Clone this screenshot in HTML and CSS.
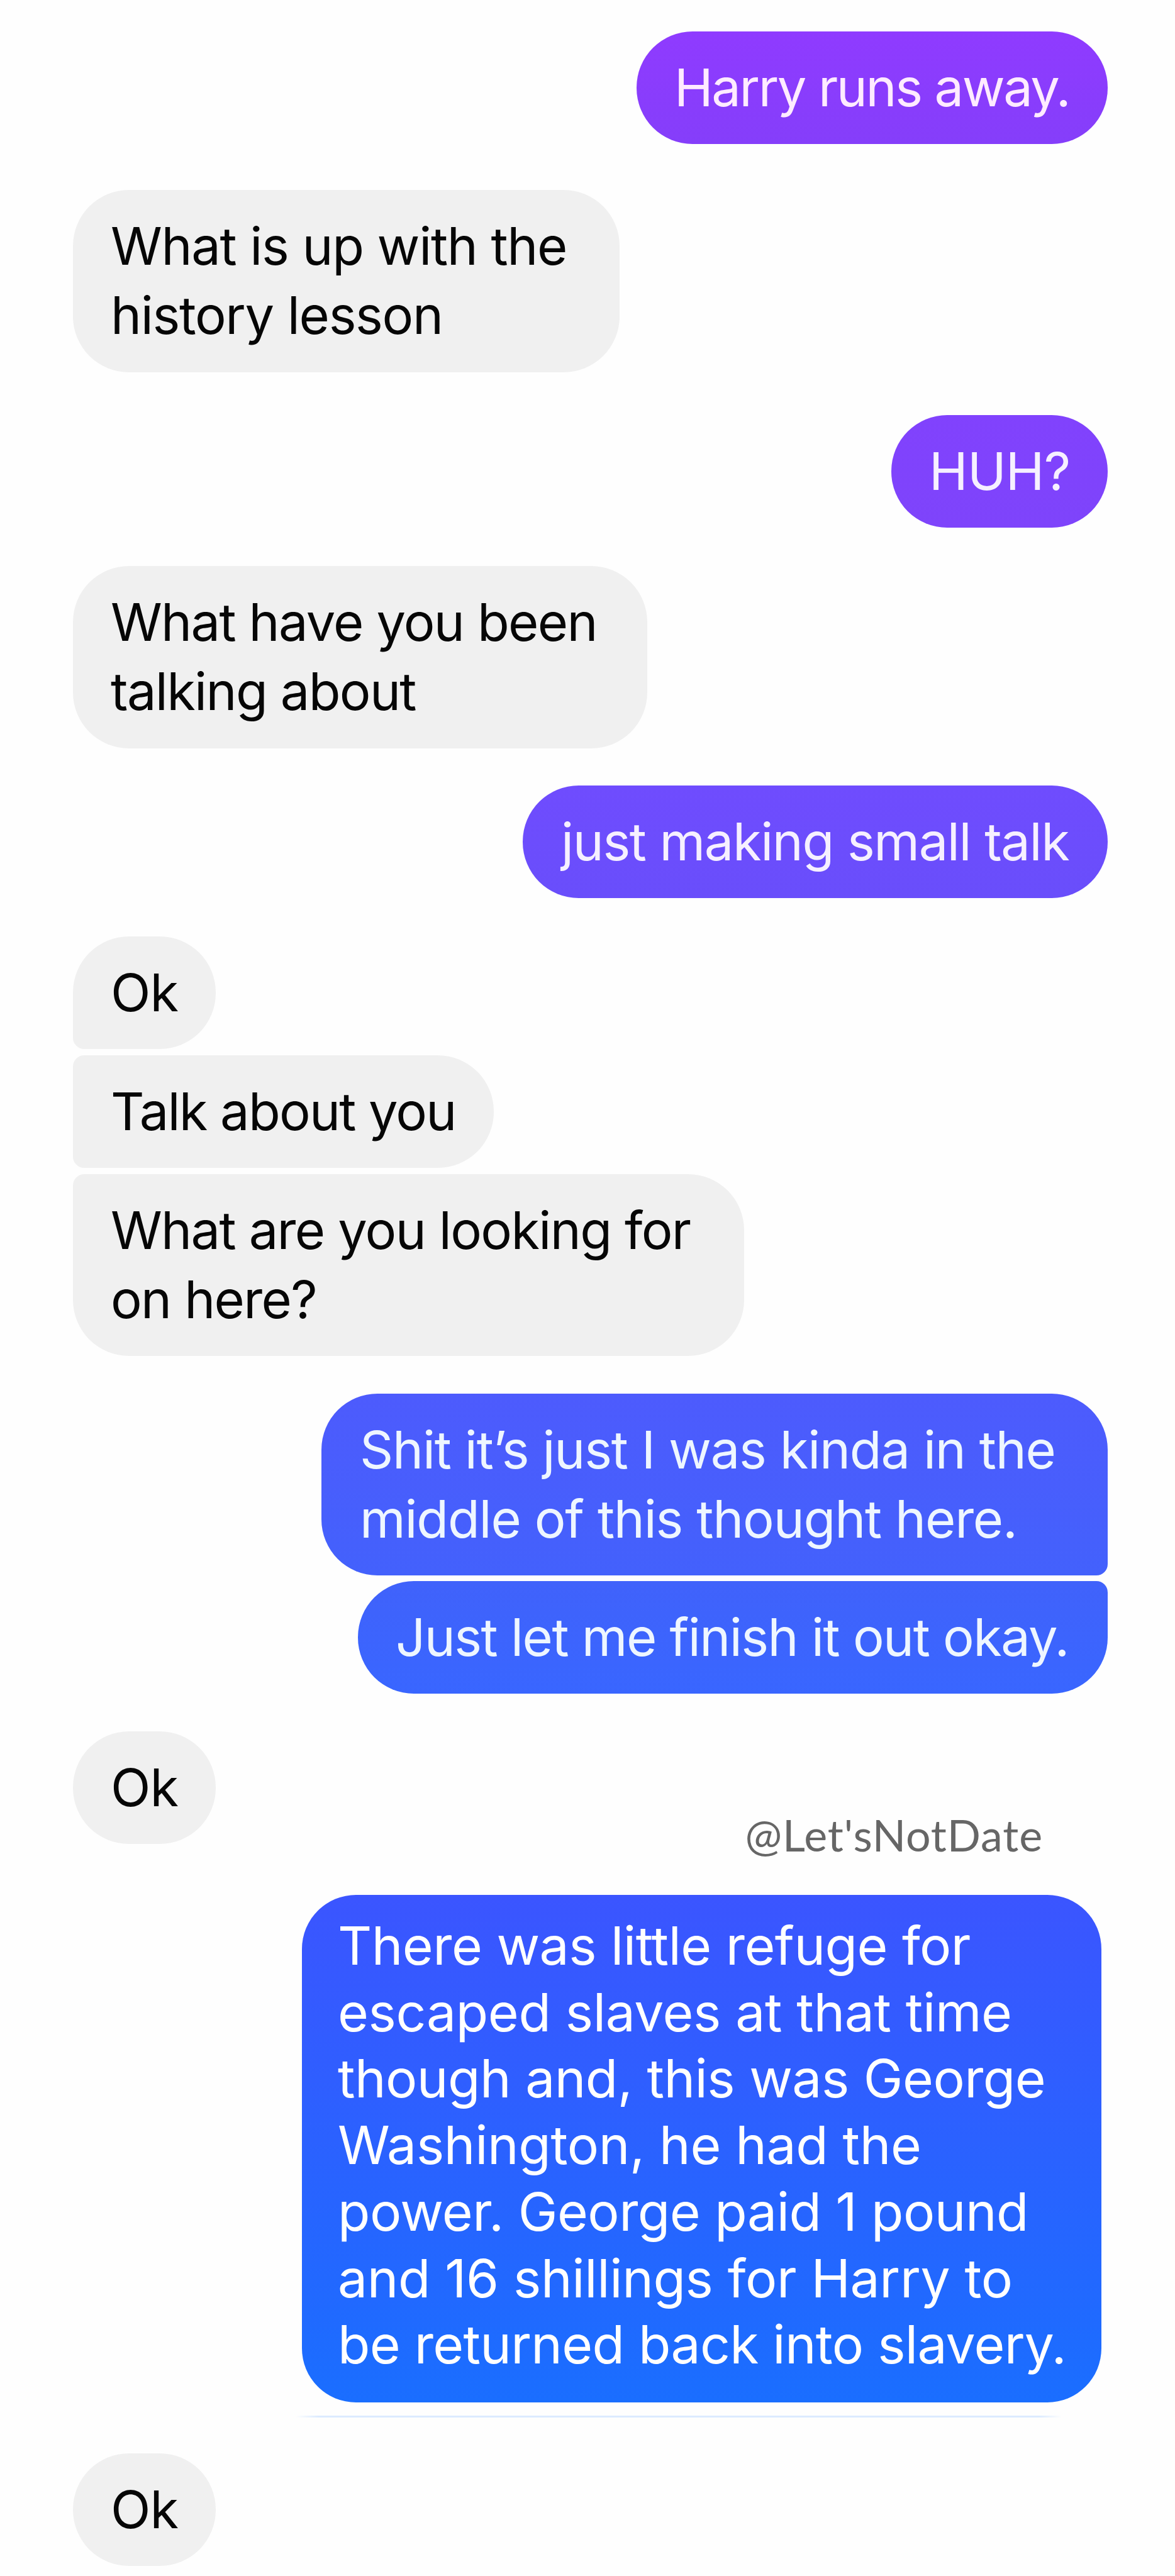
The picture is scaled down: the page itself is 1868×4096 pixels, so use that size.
FILE: index.html
```html
<!DOCTYPE html>
<html lang="en">
<head>
    <meta charset="UTF-8">
    <meta name="viewport" content="width=device-width, initial-scale=1.0">
    <title>Chat</title>
    <link rel="stylesheet" href="styles.css">
</head>
<body>

    <div class="chat">
        <div class="message sent harry">Harry runs away.</div>

        <div class="message received lesson">What is up with the<br>history lesson</div>

        <div class="message sent huh">HUH?</div>

        <div class="message received talking">What have you been<br>talking about</div>

        <div class="message sent small-talk">just making small talk</div>

        <!-- Group of three received messages -->
        <div class="message received ok group-first">Ok</div>
        <div class="message received about-you group-middle">Talk about you</div>
        <div class="message received looking group-last">What are you looking for<br>on here?</div>

        <!-- Group of two sent messages -->
        <div class="message sent thought group-first">Shit it’s just I was kinda in the<br>middle of this thought here.</div>
        <div class="message sent finish group-last">Just let me finish it out okay.</div>

        <div class="reply-row">
            <div class="message received ok">Ok</div>
            <div class="handle">@Let'sNotDate</div>
        </div>

        <div class="message sent story">
            <span class="tight">There was little refuge for</span><br>
            escaped slaves at that time<br>
            <span class="tight">though and, this was George</span><br>
            Washington, he had the<br>
            <span class="tight">power. George paid 1 pound</span><br>
            and 16 shillings for Harry to<br>
            <span class="tighter">be returned back into slavery.</span>
        </div>
        <div class="divider"></div>

        <div class="message received ok last">Ok</div>
    </div>

</body>
</html>
```
FILE: styles.css
```css
body {
    margin: 0;
    background-color: #fefefe;
    font-family: Inter, "Liberation Sans", sans-serif;
}

.chat {
    display: flex;
    flex-direction: column;
    height: 4096px;
    padding: 50px 107px 0 116px;
    box-sizing: border-box;
    overflow: hidden;
}

/* Bubbles */
.message {
    flex-shrink: 0;
    box-sizing: border-box;
    padding: 34px 0 35px 60px;
    border-radius: 89px;
    font-size: 83px;
    line-height: 110px;
    letter-spacing: -1.5px;
    white-space: nowrap;
}

.received {
    align-self: flex-start;
    background-color: #f0f0f0;
    color: #060606;
}

.sent {
    align-self: flex-end;
    color: #f6f0ff;
}

/* Squared corners where bubbles of one group meet */
.received.group-first {
    border-bottom-left-radius: 18px;
}

.received.group-middle {
    border-top-left-radius: 18px;
    border-bottom-left-radius: 18px;
}

.received.group-last {
    border-top-left-radius: 18px;
}

.sent.group-first {
    border-bottom-right-radius: 18px;
}

.sent.group-last {
    border-top-right-radius: 18px;
}

/* Single messages */
.harry {
    width: 749px;
    letter-spacing: -2.4px;
    background: linear-gradient(#8f3bff, #853efa);
    color: #ffebff;
}

.lesson {
    width: 869px;
    margin-top: 73px;
    padding-bottom: 36px;
    letter-spacing: -1.35px;
}

.huh {
    width: 344px;
    margin-top: 68px;
    letter-spacing: -0.8px;
    background: linear-gradient(#8142fd, #7e44fb);
}

.talking {
    width: 913px;
    margin-top: 61px;
    padding-bottom: 36px;
    letter-spacing: -1.68px;
}

.small-talk {
    width: 930px;
    margin-top: 59px;
    padding-left: 61px;
    letter-spacing: -1.4px;
    background: linear-gradient(#6f4cfe, #694efb);
}

.ok {
    width: 227px;
    margin-top: 61px;
    letter-spacing: -1px;
}

.about-you {
    width: 669px;
    margin-top: 10px;
    letter-spacing: -1.8px;
}

.looking {
    width: 1067px;
    margin-top: 10px;
    letter-spacing: -1.66px;
}

.thought {
    width: 1250px;
    margin-top: 60px;
    padding-left: 61px;
    letter-spacing: -1.22px;
    background: linear-gradient(#4d5bfd, #4361fc);
    color: #eef6ff;
}

.finish {
    width: 1192px;
    margin-top: 9px;
    padding-left: 60px;
    letter-spacing: -1.55px;
    background: linear-gradient(#4062fb, #3966ff);
    color: #eef6ff;
}

.reply-row {
    display: flex;
    justify-content: space-between;
    margin-top: 60px;
}

.reply-row .ok {
    margin-top: 0;
}

.handle {
    height: 50px;
    margin: 122px 103px 0 0;
    font-family: Lato, sans-serif;
    font-size: 70px;
    line-height: 84px;
    letter-spacing: 0.9px;
    color: #666666;
}

.story {
    width: 1271px;
    height: 807px;
    margin: 81px 10px 0 0;
    padding: 28px 0 0 57px;
    border-radius: 86px;
    font-size: 84px;
    line-height: 105.7px;
    letter-spacing: -0.38px;
    background: linear-gradient(#3b55ff, #1a6eff);
    color: #ffffff;
}

.story .tight {
    letter-spacing: -0.55px;
}

.story .tighter {
    letter-spacing: -0.75px;
}

.divider {
    flex-shrink: 0;
    width: 1218px;
    height: 3px;
    margin: 21px 0 0 354px;
    background: linear-gradient(90deg, transparent, #dcebff 3%, #dcebff 97%, transparent);
}

.last {
    margin-top: 57px;
}
```
